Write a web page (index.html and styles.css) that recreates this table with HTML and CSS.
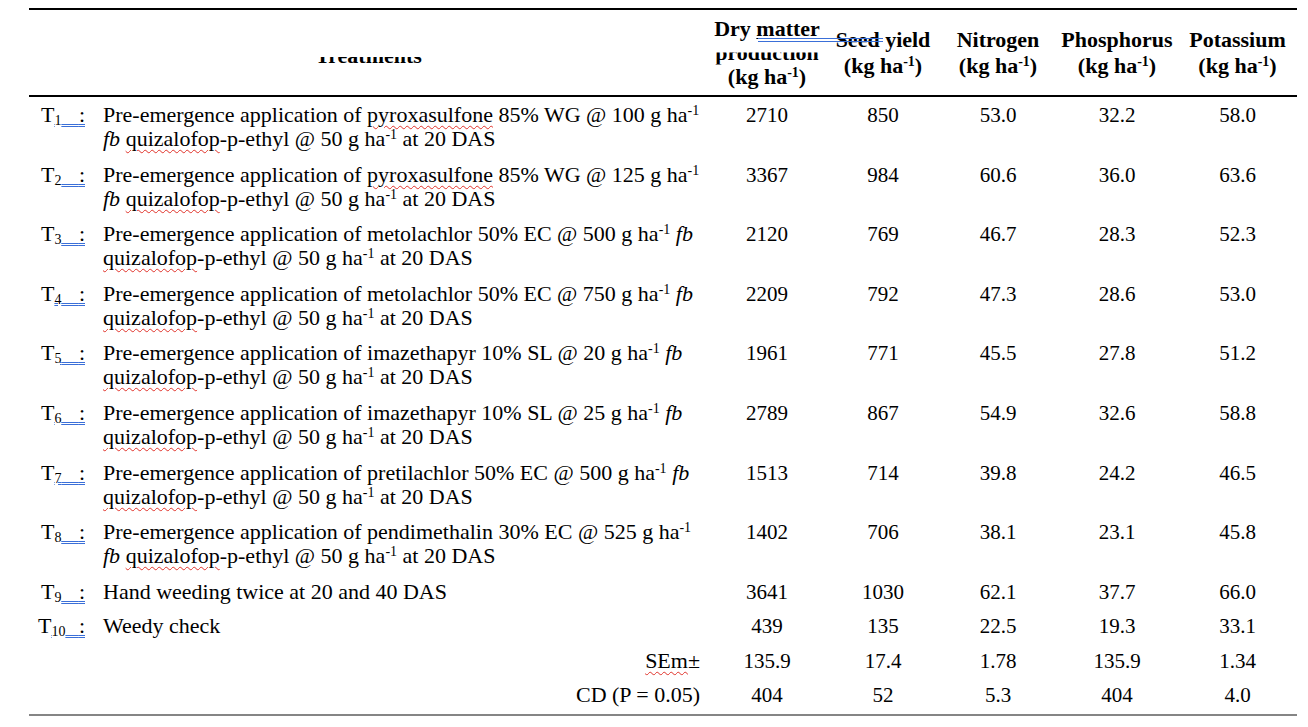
FILE: index.html
```html
<!DOCTYPE html>
<html>
<head>
<meta charset="utf-8">
<title>Treatments table</title>
<link rel="stylesheet" href="styles.css">
</head>
<body>
<div class="table">
  <div class="row head">
    <div class="h-treat"><div class="cut-t">Treatments</div></div>
    <div class="h-col h3">
      <div class="hl">Dry <span class="ul">matter</span></div>
      <div class="hl cut-p">production</div>
      <div class="hl">(kg ha<sup>-1</sup>)</div>
    </div>
    <div class="h-col"><div class="hl2">Seed yield</div><div class="hl2">(kg ha<sup>-1</sup>)</div></div>
    <div class="h-col"><div class="hl2">Nitrogen</div><div class="hl2">(kg ha<sup>-1</sup>)</div></div>
    <div class="h-col"><div class="hl2">Phosphorus</div><div class="hl2">(kg ha<sup>-1</sup>)</div></div>
    <div class="h-col"><div class="hl2">Potassium</div><div class="hl2">(kg ha<sup>-1</sup>)</div></div>
    <span class="blue-mark"></span>
  </div>

  <div class="row r2">
    <div class="lab">T<span class="bu"><sub>1</sub><span class="gap">&nbsp;</span>:</span></div>
    <div class="txt">Pre-emergence application of <span class="sq">pyroxasulfone</span> 85% WG @ 100 g ha<sup>-1</sup><br><i>fb</i> <span class="sq">quizalofop</span>-p-ethyl @ 50 g ha<sup>-1</sup> at 20 DAS</div>
    <div class="num">2710</div><div class="num">850</div><div class="num">53.0</div><div class="num">32.2</div><div class="num">58.0</div>
  </div>
  <div class="row r2">
    <div class="lab">T<span class="bu"><sub>2</sub><span class="gap">&nbsp;</span>:</span></div>
    <div class="txt">Pre-emergence application of <span class="sq">pyroxasulfone</span> 85% WG @ 125 g ha<sup>-1</sup><br><i>fb</i> <span class="sq">quizalofop</span>-p-ethyl @ 50 g ha<sup>-1</sup> at 20 DAS</div>
    <div class="num">3367</div><div class="num">984</div><div class="num">60.6</div><div class="num">36.0</div><div class="num">63.6</div>
  </div>
  <div class="row r2">
    <div class="lab">T<span class="bu"><sub>3</sub><span class="gap">&nbsp;</span>:</span></div>
    <div class="txt">Pre-emergence application of metolachlor 50% EC @ 500 g ha<sup>-1</sup> <i>fb</i><br><span class="sq">quizalofop</span>-p-ethyl @ 50 g ha<sup>-1</sup> at 20 DAS</div>
    <div class="num">2120</div><div class="num">769</div><div class="num">46.7</div><div class="num">28.3</div><div class="num">52.3</div>
  </div>
  <div class="row r2">
    <div class="lab">T<span class="bu"><sub>4</sub><span class="gap">&nbsp;</span>:</span></div>
    <div class="txt">Pre-emergence application of metolachlor 50% EC @ 750 g ha<sup>-1</sup> <i>fb</i><br><span class="sq">quizalofop</span>-p-ethyl @ 50 g ha<sup>-1</sup> at 20 DAS</div>
    <div class="num">2209</div><div class="num">792</div><div class="num">47.3</div><div class="num">28.6</div><div class="num">53.0</div>
  </div>
  <div class="row r2">
    <div class="lab">T<span class="bu"><sub>5</sub><span class="gap">&nbsp;</span>:</span></div>
    <div class="txt">Pre-emergence application of imazethapyr 10% SL @ 20 g ha<sup>-1</sup> <i>fb</i><br><span class="sq">quizalofop</span>-p-ethyl @ 50 g ha<sup>-1</sup> at 20 DAS</div>
    <div class="num">1961</div><div class="num">771</div><div class="num">45.5</div><div class="num">27.8</div><div class="num">51.2</div>
  </div>
  <div class="row r2">
    <div class="lab">T<span class="bu"><sub>6</sub><span class="gap">&nbsp;</span>:</span></div>
    <div class="txt">Pre-emergence application of imazethapyr 10% SL @ 25 g ha<sup>-1</sup> <i>fb</i><br><span class="sq">quizalofop</span>-p-ethyl @ 50 g ha<sup>-1</sup> at 20 DAS</div>
    <div class="num">2789</div><div class="num">867</div><div class="num">54.9</div><div class="num">32.6</div><div class="num">58.8</div>
  </div>
  <div class="row r2">
    <div class="lab">T<span class="bu"><sub>7</sub><span class="gap">&nbsp;</span>:</span></div>
    <div class="txt">Pre-emergence application of pretilachlor 50% EC @ 500 g ha<sup>-1</sup> <i>fb</i><br><span class="sq">quizalofop</span>-p-ethyl @ 50 g ha<sup>-1</sup> at 20 DAS</div>
    <div class="num">1513</div><div class="num">714</div><div class="num">39.8</div><div class="num">24.2</div><div class="num">46.5</div>
  </div>
  <div class="row r2">
    <div class="lab">T<span class="bu"><sub>8</sub><span class="gap">&nbsp;</span>:</span></div>
    <div class="txt">Pre-emergence application of pendimethalin 30% EC @ 525 g ha<sup>-1</sup><br><i>fb</i> <span class="sq">quizalofop</span>-p-ethyl @ 50 g ha<sup>-1</sup> at 20 DAS</div>
    <div class="num">1402</div><div class="num">706</div><div class="num">38.1</div><div class="num">23.1</div><div class="num">45.8</div>
  </div>
  <div class="row r1">
    <div class="lab">T<span class="bu"><sub>9</sub><span class="gap">&nbsp;</span>:</span></div>
    <div class="txt">Hand weeding twice at 20 and 40 DAS</div>
    <div class="num">3641</div><div class="num">1030</div><div class="num">62.1</div><div class="num">37.7</div><div class="num">66.0</div>
  </div>
  <div class="row r1">
    <div class="lab">T<span class="bu"><sub>10</sub><span class="gap gap10">&nbsp;</span>:</span></div>
    <div class="txt">Weedy check</div>
    <div class="num">439</div><div class="num">135</div><div class="num">22.5</div><div class="num">19.3</div><div class="num">33.1</div>
  </div>
  <div class="row r1">
    <div class="stat"><span class="sq">SEm</span>±</div>
    <div class="num">135.9</div><div class="num">17.4</div><div class="num">1.78</div><div class="num">135.9</div><div class="num">1.34</div>
  </div>
  <div class="row r1 last">
    <div class="stat">CD (P = 0.05)</div>
    <div class="num">404</div><div class="num">52</div><div class="num">5.3</div><div class="num">404</div><div class="num">4.0</div>
  </div>
</div>
</body>
</html>
```

FILE: styles.css
```css
html, body {
  margin: 0;
  padding: 0;
  background: #ffffff;
}

body {
  font-family: "Liberation Serif", "Times New Roman", serif;
  font-size: 22px;
  color: #000000;
}

.table {
  margin: 8px 0 0 29px;
  width: 1268px;
  border-top: 2px solid #000000;
  border-bottom: 2px solid #858585;
  padding-bottom: 2.6px;
}

.row {
  display: grid;
  grid-template-columns: 69px 610px 118px 114px 116px 122px 119px;
  line-height: 24px;
}

.r2 {
  padding: 6px 0 5.6px;
}

.r1 {
  padding: 6px 0 4.4px;
}

/* header */
.head {
  position: relative;
  height: 85px;
  border-bottom: 2px solid #000000;
  font-weight: bold;
}

.h-treat {
  grid-column: 1 / 3;
  text-align: center;
  padding-top: 34px;
}

.cut-t {
  line-height: 24px;
  clip-path: inset(13px 0 0 0);
}

.h-col {
  display: flex;
  flex-direction: column;
  justify-content: center;
  align-items: center;
  white-space: nowrap;
}

.hl {
  line-height: 24px;
}

.hl2 {
  line-height: 26px;
}

.cut-p {
  clip-path: inset(12px 0 0 0);
}

.ul {
  text-decoration: underline;
  text-decoration-thickness: 1px;
  text-underline-offset: 2px;
}

.blue-mark {
  position: absolute;
  left: 729px;
  top: 28px;
  width: 125px;
  height: 2px;
  border-top: 1px solid #3a6fd8;
  border-bottom: 1px solid #3a6fd8;
}

sup {
  font-size: 14px;
  line-height: 0;
  vertical-align: 7px;
}

sub {
  font-size: 14px;
  line-height: 0;
  vertical-align: -3px;
}

/* body cells */
.lab {
  text-align: right;
  padding-right: 13px;
  white-space: nowrap;
}

.bu {
  text-decoration: underline double #3a6fd8;
  text-decoration-thickness: 1px;
  text-underline-offset: 2px;
}

.gap {
  letter-spacing: 12px;
}

.gap10 {
  letter-spacing: 8px;
}

.txt {
  padding-left: 5px;
  white-space: nowrap;
}

.sq {
  text-decoration: underline wavy #e0322a;
  text-decoration-thickness: 1px;
  text-underline-offset: 3px;
}

.num {
  text-align: center;
  font-size: 21px;
}

.stat {
  grid-column: 1 / 3;
  text-align: right;
  padding-right: 8px;
}
```
